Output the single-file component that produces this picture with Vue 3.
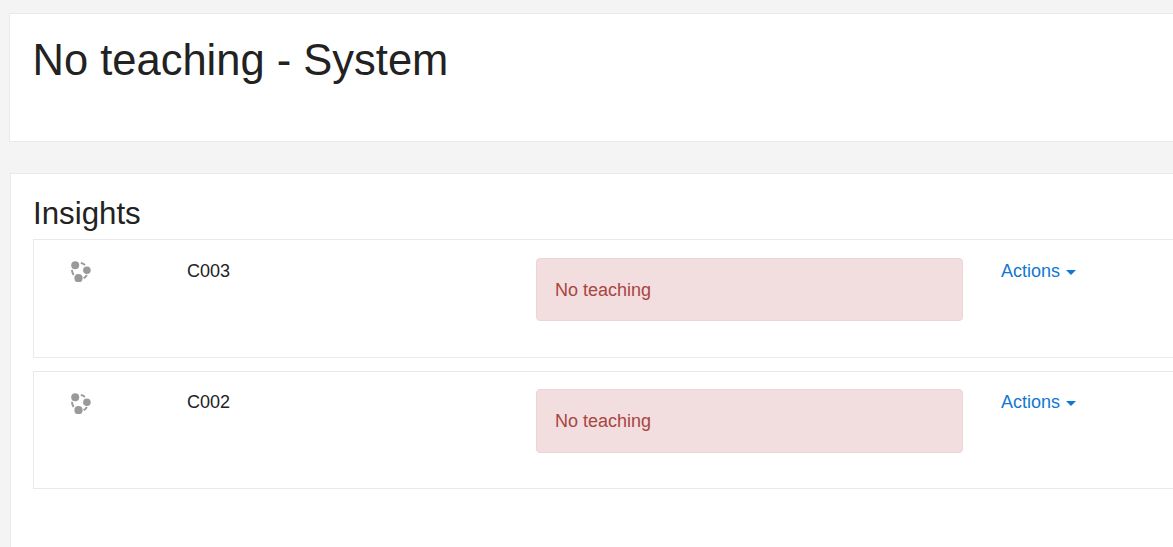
<template>
  <div class="page">
    <header class="page-header">
      <h1>No teaching - System</h1>
    </header>

    <section class="insights">
      <h2>Insights</h2>
      <div v-for="row in rows" :key="row.course" class="insight-row">
        <div class="cell-icon">
          <svg class="insight-icon" viewBox="0 0 22 22" width="22" height="22" aria-hidden="true">
            <circle cx="5.2" cy="5.2" r="4" />
            <circle cx="16.9" cy="10.2" r="3.8" />
            <circle cx="8.5" cy="18.2" r="4.1" />
            <path class="link" d="M10.8 3 Q13.2 3.4 15 4.9 M1.9 9.8 Q2.2 12.6 3.6 15 M13.6 18.2 Q15.6 17.2 16.9 15" />
          </svg>
        </div>
        <div class="cell-course">{{ row.course }}</div>
        <div class="cell-message">
          <div class="alert">{{ row.message }}</div>
        </div>
        <div class="cell-actions">
          <a class="actions" href="#" @click.prevent>Actions<span class="caret"></span></a>
        </div>
      </div>
    </section>
  </div>
</template>

<script setup>
const rows = [
  { course: 'C003', message: 'No teaching' },
  { course: 'C002', message: 'No teaching' }
]
</script>

<style>
html,
body {
  margin: 0;
  background: #f4f4f4;
  overflow: hidden;
}
</style>

<style scoped>
.page {
  width: 1200px;
  height: 547px;
  padding: 13px 0 0 9px;
  box-sizing: border-box;
  font-family: "Liberation Sans", Arial, sans-serif;
  color: #222;
}

.page-header {
  height: 129px;
  box-sizing: border-box;
  padding: 20px 0 0 22.5px;
  background: #fff;
  border: 1px solid #e9e9e9;
}

h1 {
  margin: 0;
  font-size: 43.5px;
  font-weight: 400;
  line-height: 53px;
}

.insights {
  margin: 31px 0 0 1px;
  height: 400px;
  box-sizing: border-box;
  padding: 22px 0 0 22px;
  background: #fff;
  border: 1px solid #e9e9e9;
}

h2 {
  margin: 0;
  height: 43.4px;
  font-size: 31.25px;
  font-weight: 400;
  line-height: 36px;
}

.insight-row {
  display: grid;
  grid-template-columns: 153px 349px 465px 1fr;
  height: 118.4px;
  box-sizing: border-box;
  margin-bottom: 13.1px;
  border: 1px solid #e9e9e9;
  font-size: 18px;
  line-height: 27px;
}

.cell-icon {
  padding: 20px 0 0 36px;
}

.insight-icon {
  display: block;
  fill: #9a9a9a;
}

.link {
  fill: none;
  stroke: #9a9a9a;
  stroke-width: 1.9;
}

.cell-course {
  padding-top: 17.4px;
}

.alert {
  box-sizing: border-box;
  width: 427px;
  height: 63.3px;
  margin-top: 17.4px;
  padding: 18px 18px;
  color: #a94442;
  background: #f2dede;
  border: 1px solid #eed3d7;
  border-radius: 4px;
}

.cell-actions {
  padding-top: 17.4px;
}

.actions {
  color: #1177d1;
  text-decoration: none;
}

.caret {
  display: inline-block;
  margin-left: 5.5px;
  vertical-align: 2px;
  border-top: 5px solid #1177d1;
  border-left: 5.5px solid transparent;
  border-right: 5.5px solid transparent;
}
</style>
